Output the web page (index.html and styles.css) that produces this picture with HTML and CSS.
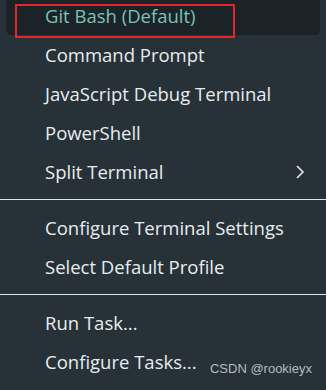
FILE: index.html
```html
<!DOCTYPE html>
<html lang="en">
<head>
    <meta charset="UTF-8">
    <meta name="viewport" content="width=device-width, initial-scale=1.0">
    <title>Terminal Menu</title>
    <link rel="stylesheet" href="styles.css">
</head>
<body>
    <div class="menu">
        <div class="item active">
            <span>Git Bash (Default)</span>
            <div class="mark"></div>
        </div>
        <div class="item"><span>Command Prompt</span></div>
        <div class="item"><span>JavaScript Debug Terminal</span></div>
        <div class="item"><span>PowerShell</span></div>
        <div class="item">
            <span>Split Terminal</span>
            <svg class="chevron" width="10" height="16" viewBox="0 0 10 16">
                <path d="M2 2 L8 8 L2 14" fill="none" stroke="#e6e9ea" stroke-width="1.6"/>
            </svg>
        </div>
        <div class="sep"></div>
        <div class="item"><span>Configure Terminal Settings</span></div>
        <div class="item"><span>Select Default Profile</span></div>
        <div class="sep"></div>
        <div class="item"><span>Run Task...</span></div>
        <div class="item last">
            <span class="label">Configure Tasks...</span>
            <span class="watermark">CSDN @rookieyx</span>
        </div>
    </div>
</body>
</html>
```

FILE: styles.css
```css
body {
    margin: 0;
    background-color: #263238;
    font-family: "Open Sans", "Noto Sans", sans-serif;
    overflow: hidden;
}
.menu {
    width: 326px;
    height: 394px;
    background-color: #263238;
    margin-top: -4px;
}
.item {
    position: relative;
    display: flex;
    align-items: center;
    height: 39px;
    margin: 0 6px;
    padding-left: 39px;
    padding-right: 20px;
    font-size: 18.5px;
    color: #e8ecee;
    border-radius: 5px;
    white-space: nowrap;
}
.item.active {
    background-color: #1b2329;
    color: #79c2b5;
}
.mark {
    position: absolute;
    left: 9px;
    top: 8px;
    width: 216px;
    height: 30px;
    border: 2px solid #e3262a;
}
.chevron {
    margin-left: auto;
    margin-right: -5px;
}
.sep {
    height: 1px;
    margin: 8px 0;
    background-color: #dfe6e8;
}
.watermark {
    margin-left: auto;
    margin-right: -12px;
    margin-top: 14px;
    flex-shrink: 0;
    font-family: "Liberation Sans", Arial, sans-serif;
    font-size: 13px;
    color: #b4bcc0;
}
```
